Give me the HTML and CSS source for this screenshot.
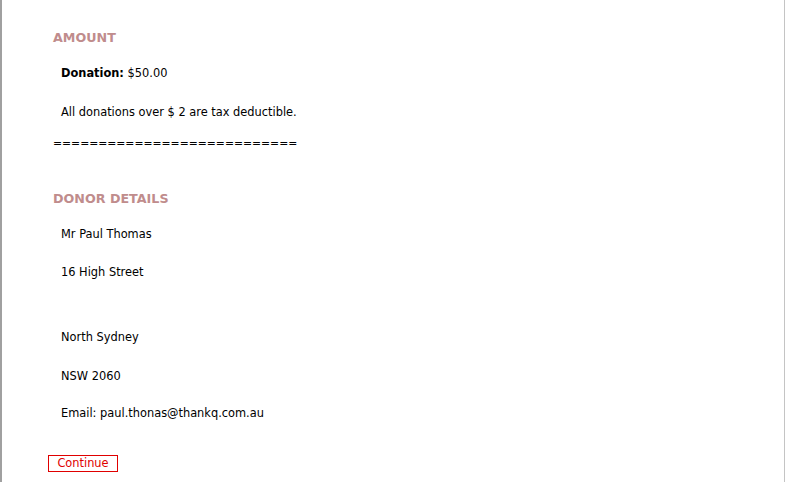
FILE: index.html
```html
<!DOCTYPE html>
<html lang="en">
<head>
    <meta charset="UTF-8">
    <title>Donation Summary</title>
    <link rel="stylesheet" href="styles.css">
</head>
<body>
    <div class="page">
        <h2 class="section-title">AMOUNT</h2>
        <p class="line first tall"><b>Donation:</b> $50.00</p>
        <p class="line">All donations over $ 2 are tax deductible.</p>
        <p class="rule">===========================</p>

        <h2 class="section-title">DONOR DETAILS</h2>
        <p class="line first">Mr Paul Thomas</p>
        <p class="line wide">16 High Street</p>
        <p class="line tall">North Sydney</p>
        <p class="line short">NSW 2060</p>
        <p class="line last">Email: paul.thonas@thankq.com.au</p>

        <button class="continue">Continue</button>
    </div>
</body>
</html>
```

FILE: styles.css
```css
html, body {
    margin: 0;
    height: 100%;
}
body {
    font-family: "DejaVu Sans", Verdana, sans-serif;
    font-size: 11.4px;
    color: #000;
    background: #fff;
}
.page {
    box-sizing: border-box;
    height: 100%;
    border-left: 2px solid #a0a0a0;
    border-right: 1px solid #c4c4c4;
    padding: 30px 0 0 51px;
}
.section-title {
    margin: 0;
    font-size: 12.7px;
    line-height: 16px;
    font-weight: bold;
    color: #c08c8c;
}
.line {
    margin: 0 0 24px 8px;
    line-height: 14px;
}
.line.first {
    margin-top: 20px;
}
.line.tall {
    margin-bottom: 25px;
}
.line.short {
    margin-bottom: 23px;
}
.line.wide {
    margin-bottom: 51px;
}
.line.last {
    margin-bottom: 35px;
}
.rule {
    margin: -6px 0 40px 0;
    font-size: 10.8px;
    line-height: 14px;
}
.continue {
    display: block;
    margin-left: -5px;
    width: 70px;
    height: 17px;
    padding: 0;
    border: 1px solid #e00000;
    background: #fff;
    color: #e00000;
    font-family: "DejaVu Sans", Verdana, sans-serif;
    font-size: 11.4px;
    line-height: 15px;
}
```
